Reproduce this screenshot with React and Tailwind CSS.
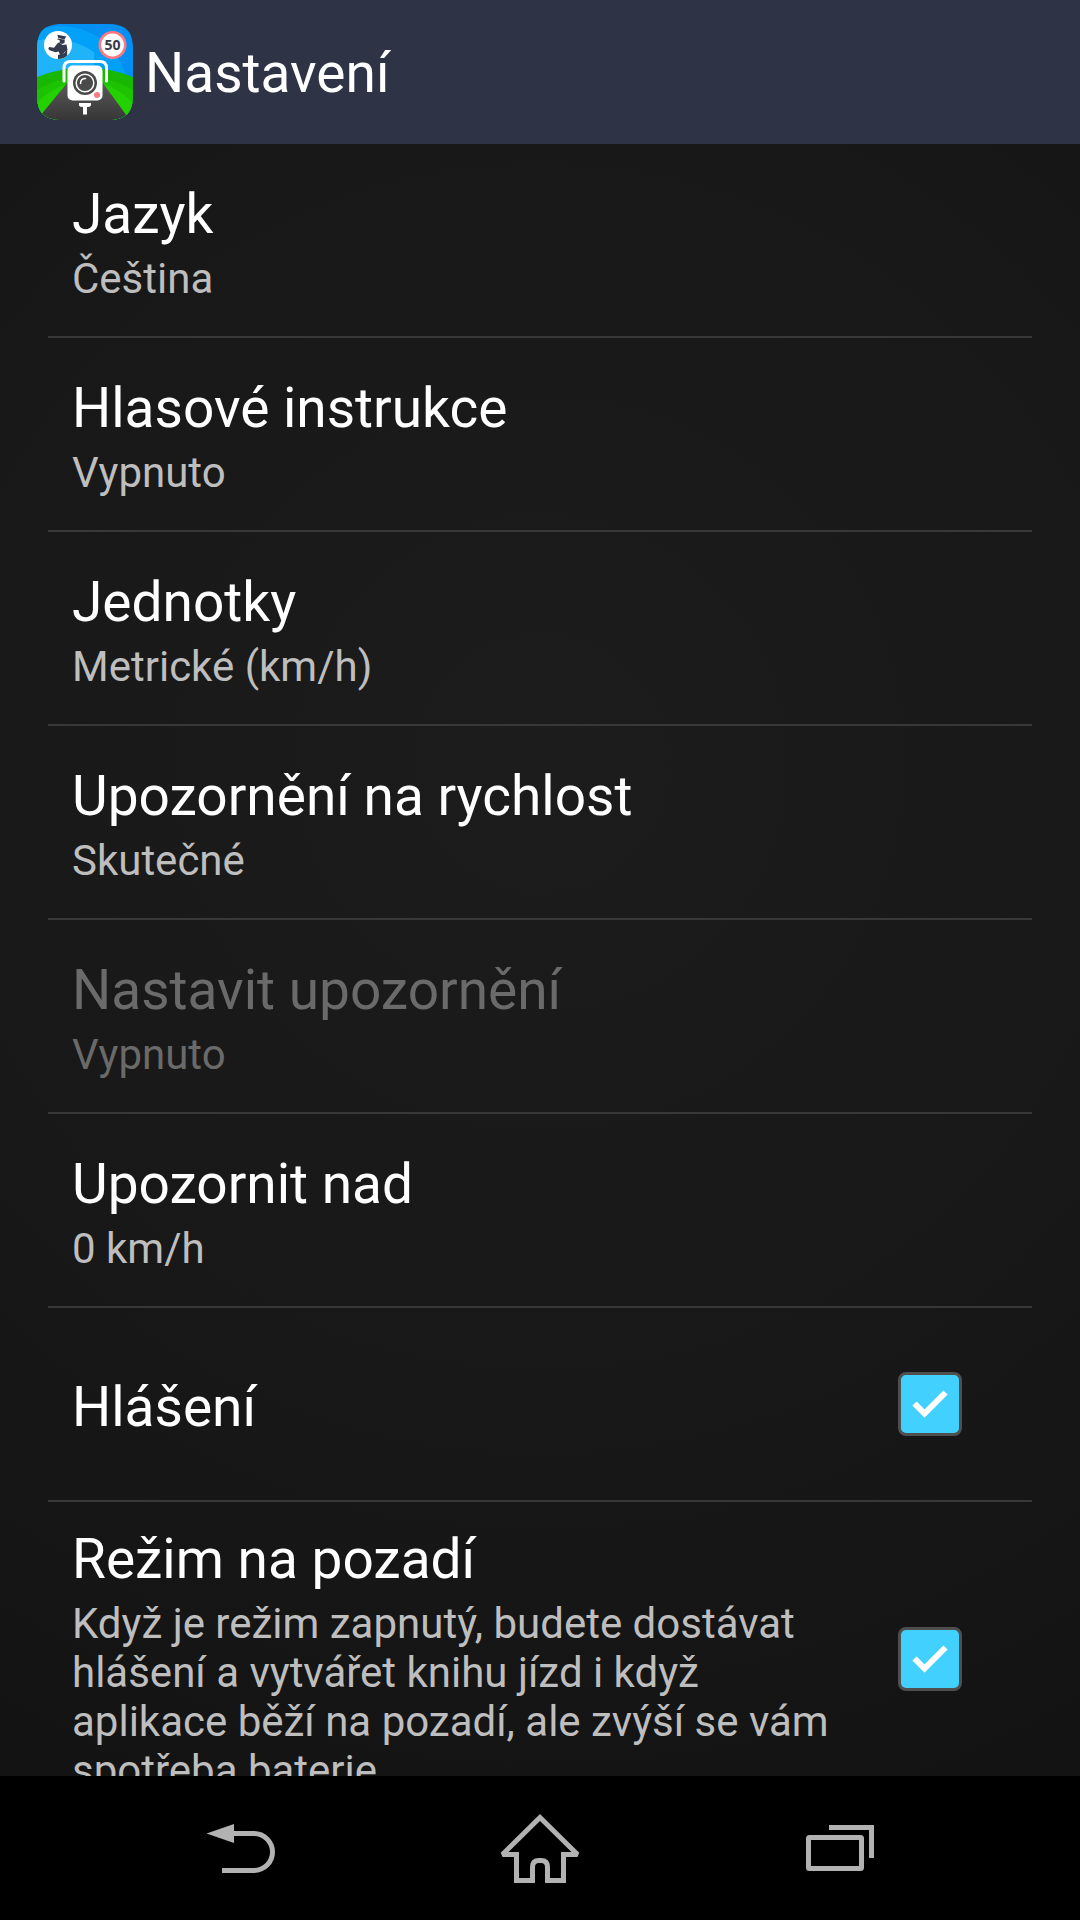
import React, { useState } from 'react'

const settings = [
  { id: 'language', title: 'Jazyk', summary: 'Čeština' },
  { id: 'voice', title: 'Hlasové instrukce', summary: 'Vypnuto' },
  { id: 'units', title: 'Jednotky', summary: 'Metrické (km/h)' },
  { id: 'speed', title: 'Upozornění na rychlost', summary: 'Skutečné' },
  { id: 'alert', title: 'Nastavit upozornění', summary: 'Vypnuto', disabled: true },
  { id: 'limit', title: 'Upozornit nad', summary: '0 km/h' },
]

const toggles = [
  { id: 'reports', title: 'Hlášení' },
  {
    id: 'background',
    title: 'Režim na pozadí',
    summary:
      'Když je režim zapnutý, budete dostávat hlášení a vytvářet knihu jízd i když aplikace běží na pozadí, ale zvýší se vám spotřeba baterie.',
  },
]

const AppLogo = () => (
  <svg viewBox="0 0 96 96" className="size-24 shrink-0" aria-hidden="true">
    <defs>
      <clipPath id="logo-shape">
        <path d="M0 26C0 7 7 0 26 0h44c19 0 26 7 26 26v44c0 19-7 26-26 26H26C7 96 0 89 0 70z" />
      </clipPath>
      <clipPath id="logo-badge">
        <circle cx="21" cy="21" r="14" />
      </clipPath>
      <linearGradient id="logo-road" x1="0" y1="0" x2="0" y2="1">
        <stop offset="0" stopColor="#5a5a5a" />
        <stop offset="1" stopColor="#363636" />
      </linearGradient>
    </defs>
    <g clipPath="url(#logo-shape)">
      <rect width="96" height="96" fill="#0390f2" />
      <circle cx="24" cy="68" r="66" fill="#03a0f7" />
      <circle cx="14" cy="92" r="77" fill="#1fb4fa" />
      <path d="M58 17c17 7 28 20 31 36H56z" fill="#03a0f7" />
      {/* hills */}
      <path d="M0 53q48-19 96 0v43H0z" fill="#19b800" />
      <path d="M0 66q12-8 30-11h36q18 3 30 11v30H0z" fill="#1dc200" />
      <path d="M0 79q13-14 30-19h36q17 5 30 19v17H0z" fill="#24d100" />
      <path d="M31 58h34l25 34v4H3v-4z" fill="url(#logo-road)" />
    </g>
    {/* camera */}
    <path d="M27 57V44q0-6.500 6.500-6.500h29.500q6.500 0 6.500 6.500v13" fill="none" stroke="#fff" strokeWidth="3" strokeLinecap="round" />
    <rect x="30.500" y="41.500" width="35" height="35" rx="5" fill="#fff" />
    <circle cx="48" cy="59" r="12" fill="#4a4a4a" />
    <circle cx="48" cy="59" r="8.800" fill="none" stroke="#fff" strokeWidth="1.500" />
    <path d="M43.500 59.500q0-5 5-5" fill="none" stroke="#fff" strokeWidth="1.500" strokeLinecap="round" />
    <circle cx="60" cy="71" r="3" fill="#ff7880" />
    <path d="M42 79h12v2.500q-1 1.500-4 1.500v7.500h-4V83q-3 0-4-1.500z" fill="#fff" />
    {/* policeman */}
    <circle cx="21" cy="21" r="14" fill="#fff" />
    <g clipPath="url(#logo-badge)" fill="#353b4c">
      <path d="M20.500 10.800l8.800 1.700-2 3-6.300-1.800z" />
      <path d="M20 15.300l1-.8 6.800 1.300-.3 3.200-2.500 1-2.300-1.300v-2.400z" />
      <path d="M11.300 24.300l1-1.300 4.700.8 4-5 1.500-.3 3 2.500 4-.5 1 5.500-7 5.500-2-4-3 .8-6.500-2.200z" />
      <path d="M21 31l6.500-2 2.700-3.500V36H21z" />
    </g>
    {/* speed limit */}
    <circle cx="75.500" cy="21" r="12.700" fill="#fff" stroke="#ff7880" strokeWidth="2.600" />
    <text x="75.500" y="26" textAnchor="middle" fontFamily="Open Sans, sans-serif" fontSize="14" fontWeight="700" fill="#353b4c">
      50
    </text>
  </svg>
)

const Checkbox = ({ id, checked, onChange }) => (
  <span className="relative size-16 shrink-0">
    <input
      id={id}
      type="checkbox"
      checked={checked}
      onChange={onChange}
      className="peer block size-16 appearance-none rounded-lg border-3 border-[#4f4f4f] checked:bg-[#42d0ff]"
    />
    <svg viewBox="0 0 64 64" className="pointer-events-none absolute inset-0 hidden size-16 peer-checked:block" aria-hidden="true">
      <path d="M16.500 31.500l10 10 21-21" fill="none" stroke="#fff" strokeWidth="6" />
    </svg>
  </span>
)

const RowText = ({ title, summary, disabled }) => (
  <span className="flex-1 pt-1.5">
    <span className={`block text-[55px] leading-[63px] ${disabled ? 'text-[#6a6a6a]' : 'text-white'}`}>{title}</span>
    {summary && (
      <span className={`mt-2 block text-[42px] leading-[49px] ${disabled ? 'text-[#6a6a6a]' : 'text-[#bebebe]'}`}>{summary}</span>
    )}
  </span>
)

const NavButton = ({ label, children }) => (
  <button type="button" aria-label={label} className="flex items-center justify-center">
    <svg viewBox="0 0 96 96" className="size-24" fill="none" stroke="#b2b2b2" strokeWidth="5">
      {children}
    </svg>
  </button>
)

const App = () => {
  const [enabled, setEnabled] = useState({ reports: true, background: true })

  const toggle = (id) => setEnabled((prev) => ({ ...prev, [id]: !prev[id] }))

  return (
    <div className="flex h-screen flex-col bg-black font-[Roboto,sans-serif]">
      <header className="flex h-36 shrink-0 items-center gap-3 bg-[#2e3346] px-[37px]">
        <AppLogo />
        <h1 className="pt-0.5 text-[55px] leading-[63px] text-white">Nastavení</h1>
      </header>

      <main className="min-h-0 flex-1 overflow-y-auto bg-[radial-gradient(circle_at_50%_38%,#1c1c1c,#181818_55%,#131313)] px-12 [scrollbar-width:none]">
        <ul className="divide-y-2 divide-[#383838]">
          {settings.map((item) => (
            <li key={item.id}>
              <button type="button" disabled={item.disabled} className="flex min-h-48 w-full items-center px-6 text-left">
                <RowText {...item} />
              </button>
            </li>
          ))}
          {toggles.map((item) => (
            <li key={item.id}>
              <label htmlFor={item.id} className="flex min-h-48 items-center gap-14 py-5 pr-[70px] pl-6">
                <RowText {...item} />
                <Checkbox id={item.id} checked={enabled[item.id]} onChange={() => toggle(item.id)} />
              </label>
            </li>
          ))}
        </ul>
      </main>

      <nav className="grid h-36 shrink-0 grid-cols-3 bg-black px-[90px]">
        <NavButton label="Zpět">
          <path d="M42 33.500h20a18.500 18.500 0 0 1 0 37H30" />
          <path d="M14.500 33.500L42 24v19z" fill="#b2b2b2" stroke="none" />
        </NavButton>
        <NavButton label="Domů">
          <path
            d="M48 17.500L85.500 54.500H71.500v26h-16V67q0-6.500-6.500-6.500h-2q-6.500 0-6.500 6.500v13.500h-16v-26H10.500z"
            strokeLinejoin="miter"
            strokeMiterlimit="2"
          />
        </NavButton>
        <NavButton label="Poslední aplikace">
          <rect x="16.500" y="37.500" width="53" height="31" rx="1" />
          <path d="M37 27.500h42.500V58" />
        </NavButton>
      </nav>
    </div>
  )
}

export default App
